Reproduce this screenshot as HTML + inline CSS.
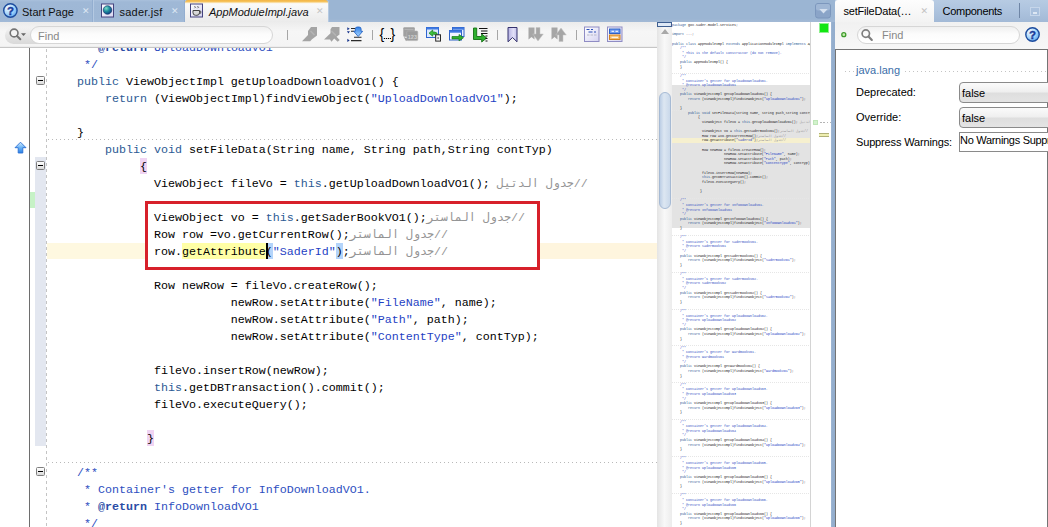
<!DOCTYPE html>
<html lang="en"><head><meta charset="utf-8"><title>AppModuleImpl.java</title>
<style>
*{box-sizing:border-box;margin:0;padding:0}
html,body{width:1048px;height:527px;overflow:hidden;background:#fff}
body{position:relative;font-family:"Liberation Sans","DejaVu Sans",sans-serif;font-size:11px;color:#000}
.abs{position:absolute}
/* ---------- left tab bar ---------- */
#tabbar{left:0;top:0;width:835px;height:22px;background:linear-gradient(#9bb5d3 0,#9bb5d3 19px,#a2b9d5 21px)}
.tab{top:0;height:22px;background:linear-gradient(#a9c0dc 0,#9fb8d6 2px,#9eb7d5 80%,#a2bad7);border-right:1px solid #93aed0;box-shadow:1px 0 0 #b4c9e2;white-space:nowrap}
.tab .t{position:absolute;top:6px;font-size:11px;color:#111}
.tab .x{position:absolute;top:6px;font-size:9px;color:#dbe6f3}
#tabA{left:185px;width:143px;background:linear-gradient(#f2b444 0,#f7c763 2px,#fbf3e2 3px,#fafafa 4px,#f2f2f2 60%,#ebebeb);border:0;border-radius:3px 3px 0 0}
/* ---------- toolbar ---------- */
#tbar{left:0;top:22px;width:657px;height:25px;background:linear-gradient(#ececec,#f6f6f6 40%,#f4f4f4);border-bottom:1px solid #ededed}
.find{border:1px solid #d6d6d6;border-radius:9px;background:linear-gradient(#f0f0f0,#fcfcfc 45%,#fff);color:#888;font-size:11px}
.sep{width:1px;background:#a9a9a9;top:30px;height:10px}
/* ---------- editor ---------- */
#ed{left:0;top:47px;width:657px;height:480px;background:#fff;overflow:hidden}
.ln{position:absolute;left:49px;height:17px;line-height:17px;white-space:pre;font-family:"Liberation Mono","DejaVu Sans Mono",monospace;font-size:11.667px;color:#000}
.k{color:#2c5a94}.s{color:#1f3fc4}.c{color:#949494}.d{color:#2e4fbf}.b{color:#2b4ca6;font-weight:bold}
.hl{position:absolute;height:16px}
.fold{left:36px;width:9px;height:9px;border:1px solid #7f7f7f;border-radius:1.5px;background:linear-gradient(#fff,#dadada)}
.fold:after{content:"";position:absolute;left:1px;top:3px;width:5px;height:1px;background:#000}
.dsep{left:48px;width:609px;height:1px;background:repeating-linear-gradient(90deg,#b9b9b9 0 1px,transparent 1px 4px)}
/* ---------- minimap ---------- */
#vs{left:657px;top:22px;width:15px;height:505px;background:linear-gradient(90deg,#e4e4e4,#f8f8f8 50%,#ececec)}
#mm{left:672px;top:22px;width:138px;height:505px;background:#fff;overflow:hidden}
#mmv{left:0;top:62.8px;width:139px;height:143px;background:#e3e3e3}
#mmc{left:0;top:116px;width:139px;height:5px;background:#f6f0cf}
.msep{border-top-color:#e6e6e6 !important;margin-top:0.8px}
#mmt{position:absolute;left:0;top:1.2px;font-family:"Liberation Mono","DejaVu Sans Mono",monospace;font-size:3.333px;line-height:4.61px;white-space:pre;color:#222}
#mmt .k{color:#2c5a94}#mmt .s{color:#1f3fc4}#mmt .c{color:#949494}#mmt .d{color:#2e4fbf}
.msep{position:absolute;left:0;width:139px;height:0;border-top:1px dotted #d6d6d6}
#rs{left:810px;top:22px;width:21px;height:505px;background:#fff}
/* ---------- right panel ---------- */
#split{left:831px;top:22px;width:4px;height:505px;background:linear-gradient(90deg,#a2b8d4,#95afce 30%,#93adcd)}
#rtab{left:835px;top:0;width:213px;height:22px;background:linear-gradient(#b7cbe3,#adc3de 50%,#a2b9d6)}
#rtabA{left:835px;top:0;width:99px;height:22px;background:linear-gradient(#fdfdfd,#f3f3f3);border-radius:3px 3px 0 0}
#rbar{left:835px;top:22px;width:213px;height:27px;background:linear-gradient(#f1f1f1,#f7f7f7)}
#rbody{left:835px;top:49px;width:213px;height:478px;background:#fff;border-top:1px solid #747474;border-left:1px solid #747474;border-right:1px solid #747474}
.lbl{font-size:11px;white-space:nowrap}
.combo{left:959px;width:100px;height:21px;border:1px solid #8a8a8a;border-radius:4px;background:linear-gradient(#fbfbfb 0,#efefef 46%,#dedede 54%,#e4e4e4 100%);font-size:11px;padding:4px 0 0 2px}
</style></head><body>
<!-- tab bar -->
<div id="tabbar" class="abs"></div>
<div class="tab abs" style="left:0;width:93px"><span class="t" style="left:22px">Start Page</span><span class="x" style="left:82px">✕</span></div>
<div class="tab abs" style="left:94px;width:91px"><span class="t" style="left:25.400px;letter-spacing:0.25px">sader.jsf</span><span class="x" style="left:77px">✕</span></div>
<div class="tab abs" id="tabA"><span class="t" style="left:24px;font-style:italic">AppModuleImpl.java</span><span class="x" style="left:131px;color:#c4c4c4">✕</span></div>
<!-- toolbar -->
<div id="tbar" class="abs"></div>
<div class="abs" style="left:5px;top:27px;width:40px;height:17px;border-radius:8.500px;background:linear-gradient(rgba(240,240,240,0),#e6e6e6 45%,#d9d9d9)"></div>
<div class="find abs" style="left:30px;top:26px;width:243px;height:18px;padding:3px 0 0 7px">Find</div>
<svg class="abs" style="left:0;top:0" width="835" height="47" viewBox="0 0 835 47">
<defs>
<radialGradient id="gHelp" cx=".32" cy=".3" r=".85"><stop offset="0" stop-color="#f2faff"/><stop offset=".55" stop-color="#a4d4fb"/><stop offset="1" stop-color="#4f9eea"/></radialGradient>
<radialGradient id="gGlobe" cx=".35" cy=".3" r=".8"><stop offset="0" stop-color="#7fe0c8"/><stop offset=".45" stop-color="#1f8f9f"/><stop offset="1" stop-color="#0b2f7a"/></radialGradient>
<linearGradient id="gPage" x1="0" y1="0" x2="1" y2="1"><stop offset="0" stop-color="#ffffff"/><stop offset="1" stop-color="#d5d3f0"/></linearGradient>
<linearGradient id="gBm" x1="0" y1="0" x2="1" y2="0"><stop offset="0" stop-color="#b4b1e2"/><stop offset=".6" stop-color="#e2e0f8"/><stop offset="1" stop-color="#c2c0ea"/></linearGradient>
<linearGradient id="gBlue" x1="0" y1="0" x2="0" y2="1"><stop offset="0" stop-color="#6fa8ee"/><stop offset="1" stop-color="#2f6fd0"/></linearGradient>
<linearGradient id="gDl" x1="0" y1="0" x2="0" y2="1"><stop offset="0" stop-color="#2f7fe6"/><stop offset="1" stop-color="#a8d6ff"/></linearGradient>
</defs>
<!-- help icon -->
<circle cx="10.400" cy="10.500" r="6.700" fill="url(#gHelp)" stroke="#1d4c9e" stroke-width="1.400"/>
<text x="10.400" y="14.500" text-anchor="middle" font-family="Liberation Sans, sans-serif" font-weight="bold" font-size="11.500" fill="#1b3c9a" stroke="#1b3c9a" stroke-width=".4">?</text>
<!-- jsf icon -->
<rect x="101.5" y="4" width="12" height="13" fill="url(#gPage)" stroke="#45437f" stroke-width="1"/>
<circle cx="107.5" cy="10" r="4.3" fill="url(#gGlobe)" stroke="#0a2a66" stroke-width=".6"/>
<!-- java icon -->
<rect x="190.5" y="4" width="12" height="13" fill="url(#gPage)" stroke="#45437f" stroke-width="1"/>
<path d="M193 10.5h6.5v2.2a2.6 2.6 0 0 1-2.6 2.6h-1.3a2.6 2.6 0 0 1-2.6-2.6z" fill="#d9d9d9" stroke="#444" stroke-width="1"/>
<path d="M199.5 11.2h1.3v2h-1.6" fill="none" stroke="#444" stroke-width=".9"/>
<path d="M194.5 6.2l1 1-1 1M197.5 6.2l1 1-1 1" fill="none" stroke="#444" stroke-width=".9"/>
<!-- magnifier -->
<circle cx="14.100" cy="33" r="3.900" fill="#f4f4f4" stroke="#747474" stroke-width="1.600"/>
<path d="M17 36l3.300 3.300" stroke="#747474" stroke-width="2" stroke-linecap="round"/>
<path d="M21 33.200h5l-2.500 2.800z" fill="#666"/>
<!-- separators -->
<g stroke="#a6a6a6" stroke-width="1"><path d="M287.5 30v10M372.5 30v10M497.5 30v10M576.5 30v10"/></g>
<!-- pins (disabled) -->
<g fill="#a4a4a4">
<path d="M311 27h6v8.500l-5 3.700-1.800 2h-8.200l6-6.200v-4z"/>
<path d="M310.500 31l4 4" stroke="#b4b4b4" stroke-width="1.500"/>
<path d="M332 27h7.500v7.500l-3 2.200 3.200 3.300-2 1.700-3.500-3.200-2.700 3.200-1.500-2.200h-6l6.500-6.300v-4z"/>
<path d="M331.500 31l4.500 4.500" stroke="#b4b4b4" stroke-width="1.500"/>
</g>
<!-- download-ish icon -->
<g>
<path d="M347.300 27.300l2.400 1.500-2.400 1.500zM346.900 31.200h3l-1.500 2.200zM347.300 38.800l2.400 1.600-2.400 1.600z" fill="#18358c"/>
<path d="M351 28.500h4M351 31.300h3.500M354 37.300h7.500M351 40.600h10.500" stroke="#2a2a2a" stroke-width="1.100"/>
<path d="M355.300 29q0-2 2-2h1.800q2 0 2 2v2.300h1.600l-4.500 5.200-4.500-5.200h1.600z" fill="url(#gDl)" stroke="#1b5cc0" stroke-width=".8"/>
</g>
<!-- {..} -->
<text x="379.600" y="38.600" font-family="Liberation Sans, sans-serif" font-size="14" fill="#000">{</text>
<text x="390.600" y="38.600" font-family="Liberation Sans, sans-serif" font-size="14" fill="#000">}</text>
<path d="M383.800 38.500h1.200M385.800 38.500h1.200M387.800 38.500h1.200M389.800 38.500h1.200" stroke="#000" stroke-width="1.200"/>
<!-- gray calendar -->
<g fill="#a0a0a0"><rect x="403.300" y="27.200" width="11.500" height="9.500" rx="1"/><rect x="406.800" y="31" width="11" height="9.600" rx="1" fill="#9c9c9c" stroke="#b4b4b4" stroke-width=".6"/><path d="M403.800 37l4.500 2-2.300 2.300z"/></g>
<path d="M404.500 29.500h9" stroke="#b8b8b8" stroke-width=".8"/>
<text x="412.400" y="39.300" text-anchor="middle" font-family="Liberation Sans, sans-serif" font-size="5.500" font-weight="bold" fill="#cfcfcf">123</text>
<!-- window + green back arrow -->
<g>
<rect x="426.500" y="27.500" width="12" height="10" fill="#dde9ff" stroke="#2f66d0" stroke-width="1"/><rect x="426.500" y="27.500" width="12" height="2" fill="#3f7ae4"/>
<path d="M429 33.200l3.700-3.200v2h1.800q3 0 3 3.500v1h-2v-1q0-1.300-1.500-1.300h-1.300v2z" fill="#3fc03f" stroke="#148014" stroke-width=".7"/>
<rect x="435.700" y="34.800" width="4.800" height="6.300" fill="#f6f6f6" stroke="#2a2a2a" stroke-width="1"/><path d="M437.300 38h1.700" stroke="#333" stroke-width="1"/>
</g>
<!-- windows + green forward arrow -->
<g>
<rect x="452.5" y="27.5" width="11.5" height="9" fill="#e8f0ff" stroke="#2f62c8" stroke-width="1"/><rect x="452.5" y="27.5" width="11.500" height="2.200" fill="#3f78e0"/>
<rect x="449.5" y="30.500" width="12" height="9.500" fill="#f2f6ff" stroke="#2f62c8" stroke-width="1"/><rect x="449.500" y="30.500" width="12" height="2.200" fill="#3f78e0"/>
<path d="M452 36.500h7v-2l4.500 3.200-4.500 3.200v-2h-7z" fill="#2fb02f" stroke="#157a15" stroke-width=".7"/>
</g>
<!-- green arrow + lines -->
<g>
<path d="M473.500 28h3.200v8.500h5v-2.500l5 4-5 4v-2.500h-8.200z" fill="#2fb02f" stroke="#136f13" stroke-width=".9"/>
<path d="M479 28.500h8.500M481 31h6.500M481 33.500h6.500M485.500 36h2M485.500 38.500h2M485.500 41h2" stroke="#111" stroke-width="1.200"/>
</g>
<!-- bookmark -->
<path d="M508 27.500h9v14.300l-4.500-4.300-4.500 4.300z" fill="url(#gBm)" stroke="#35326e" stroke-width="1"/>
<!-- gray bookmark next / prev -->
<g fill="#a6a6a6">
<path d="M528.500 27.500h6v12l-3-2.600-3 2.600z"/><path d="M536 27.500h4v6.500h3.300l-5.300 7-5.300-7h3.300z" stroke="#c4c4c4" stroke-width=".5"/>
<path d="M551.500 27.500h6v12l-3-2.600-3 2.600z"/><path d="M559 41.500h4v-6.500h3.300l-5.300-7-5.300 7h3.300z" stroke="#c4c4c4" stroke-width=".5"/>
</g>
<!-- code template icon -->
<g>
<rect x="584.500" y="27" width="14.500" height="14.500" fill="url(#gPage)" stroke="#8f8cc4" stroke-width="1"/>
<path d="M586.500 29.500h3M591 29.500h2M588.500 32h4M594 32h2" stroke="#2a4fb8" stroke-width="1.200"/>
<path d="M587 35h2.500M590.500 35h2.500M594 35h2.500" stroke="#b8b8c8" stroke-width="1"/>
</g>
<g>
<rect x="607.500" y="27" width="14.500" height="14.500" fill="url(#gPage)" stroke="#8f8cc4" stroke-width="1"/>
<rect x="609.500" y="29" width="10.500" height="4.500" fill="#6f9df0" stroke="#2458c0" stroke-width=".9"/><path d="M611.500 31.300h2.500M615.500 31.300h2.500" stroke="#fff" stroke-width="1"/>
<rect x="609.500" y="35" width="10.500" height="4.500" fill="#f8c070" stroke="#d07a10" stroke-width=".9"/><path d="M611.500 37.300h6.500" stroke="#fff" stroke-width="1"/>
</g>
<!-- tab list dropdown button -->
<rect x="815.500" y="3.500" width="15" height="14.500" rx="2.500" fill="#8aa4c8" stroke="#7c97bd" stroke-width="1"/>
<rect x="816" y="4" width="14" height="6.500" rx="2" fill="#a0b7d5"/>
<path d="M819.300 9h8.400l-4.200 4.600z" fill="#d6e1f0"/>
</svg>

<!-- editor -->
<div id="ed" class="abs">
<div class="abs" style="left:47px;top:196px;width:98px;height:16px;background:#fef8e0"></div><div class="abs" style="left:540px;top:196px;width:117px;height:16px;background:#fef5de"></div>
<div class="abs" style="left:35px;top:110px;width:11px;height:289px;background:#e3e7f0"></div>
<div class="abs" style="left:30px;top:145px;width:5px;height:16px;background:#c6f2c6"></div>
<div class="abs" style="left:29px;top:0;width:1px;height:480px;background:#6e6e6e"></div>
<div class="abs" style="left:46px;top:0;width:1px;height:480px;background:repeating-linear-gradient(180deg,#c4c4c4 0 3px,transparent 3px 6px);background-position:0 2px"></div>
<div class="hl" style="left:182px;top:196px;width:84px;background:#ffffa6"></div>
<div class="hl" style="left:266px;top:196px;width:7px;background:#b4d4fa"></div>
<div class="hl" style="left:336px;top:196px;width:7px;background:#b4d4fa"></div>
<div class="hl" style="left:140px;top:111px;width:7px;background:#f0d4f3"></div>
<div class="hl" style="left:147px;top:383px;width:7px;background:#f0d4f3"></div>
<div class="dsep abs" style="top:92px"></div>
<div class="dsep abs" style="top:415px"></div>
<div class="fold abs" style="top:29px"></div>
<div class="fold abs" style="top:114px"></div>
<div class="fold abs" style="top:420px"></div>
<svg class="abs" style="left:14px;top:94px" width="14" height="14" viewBox="0 0 14 14"><defs><linearGradient id="gArr" x1="0" y1="0" x2="0" y2="1"><stop offset="0" stop-color="#d4edff"/><stop offset=".5" stop-color="#6cb4f6"/><stop offset="1" stop-color="#2a80e6"/></linearGradient></defs><path d="M6.500 1.200L12 6.700H8.800V12H4.200V6.700H1z" fill="url(#gArr)" stroke="#2a6fd4" stroke-width=".9" stroke-linejoin="round"/></svg>
<div class="ln" style="top:-7px"><span class="d">     * </span><span class="b">@return</span><span class="d"> UploadDownloadVO1</span></div>
<div class="ln" style="top:10px"><span class="d">     */</span></div>
<div class="ln" style="top:27px"><span class="k">    public</span> ViewObjectImpl getUploadDownloadVO1() {</div>
<div class="ln" style="top:44px"><span class="k">        return</span> (ViewObjectImpl)findViewObject(<span class="s">"UploadDownloadVO1"</span>);</div>
<div class="ln" style="top:61px"></div>
<div class="ln" style="top:78px">    }</div>
<div class="ln" style="top:95px"><span class="k">        public void</span> setFileData(String name, String path,String contTyp)</div>
<div class="ln" style="top:112px">             <span class="p">{</span></div>
<div class="ln" style="top:129px">               ViewObject fileVo = <span class="k">this</span>.getUploadDownloadVO1(); <span class="c" dir="rtl">//جدول الدتيل</span></div>
<div class="ln" style="top:146px"></div>
<div class="ln" style="top:163px">               ViewObject vo = <span class="k">this</span>.getSaderBookVO1();<span class="c" dir="rtl">//جدول الماستر</span></div>
<div class="ln" style="top:180px">               Row row =vo.getCurrentRow();<span class="c" dir="rtl">//جدول الماستر</span></div>
<div class="ln cur" style="top:197px">               row.<span class="sel">getAttribute</span><span class="m">(</span><span class="s">"SaderId"</span><span class="m">)</span>;<span class="c" dir="rtl">//جدول الماستر</span></div>
<div class="ln" style="top:214px"></div>
<div class="ln" style="top:231px">               Row newRow = fileVo.createRow();</div>
<div class="ln" style="top:248px">                          newRow.setAttribute(<span class="s">"FileName"</span>, name);</div>
<div class="ln" style="top:265px">                          newRow.setAttribute(<span class="s">"Path"</span>, path);</div>
<div class="ln" style="top:282px">                          newRow.setAttribute(<span class="s">"ContentType"</span>, contTyp);</div>
<div class="ln" style="top:299px"></div>
<div class="ln" style="top:316px">               fileVo.insertRow(newRow);</div>
<div class="ln" style="top:333px">               <span class="k">this</span>.getDBTransaction().commit();</div>
<div class="ln" style="top:350px">               fileVo.executeQuery();</div>
<div class="ln" style="top:367px"></div>
<div class="ln" style="top:384px">              <span class="p">}</span></div>
<div class="ln" style="top:401px"></div>
<div class="ln" style="top:418px"><span class="d">    /**</span></div>
<div class="ln" style="top:435px"><span class="d">     * Container's getter for InfoDownloadVO1.</span></div>
<div class="ln" style="top:452px"><span class="d">     * </span><span class="b">@return</span><span class="d"> InfoDownloadVO1</span></div>
<div class="ln" style="top:469px"><span class="d">     */</span></div>
<div class="abs" style="left:145px;top:154px;width:395px;height:69px;border:3px solid #d7202a"></div>
<div class="abs" style="left:266px;top:196px;width:2px;height:16px;background:#000"></div>
</div>
<div class="abs" style="left:0;top:47px;width:657px;height:1px;background:#c6c6c6"></div>
<!-- scrollbar + minimap -->
<div id="vs" class="abs"></div>
<div class="abs" style="left:657px;top:22px;width:15px;height:5px;border:1px solid #3f5f91;background:#dfe9f6"></div>
<div class="abs" style="left:661px;top:29px;width:0;height:0;border-left:4px solid transparent;border-right:4px solid transparent;border-bottom:5px solid #a8a8a8"></div>
<div class="abs" style="left:659px;top:92px;width:12px;height:117px;border-radius:6px;border:1px solid #a6bad4;background:linear-gradient(90deg,#bccee5,#dde7f2 40%,#c9d8ea)"></div>
<div id="mm" class="abs"><div id="mmv" class="abs"></div><div id="mmc" class="abs"></div><div class="msep" style="top:50.61px"></div><div class="msep" style="top:87.48px"></div><div class="msep" style="top:175.08px"></div><div class="msep" style="top:211.96px"></div><div class="msep" style="top:248.84px"></div><div class="msep" style="top:285.71px"></div><div class="msep" style="top:322.60px"></div><div class="msep" style="top:359.48px"></div><div class="msep" style="top:396.36px"></div><div class="msep" style="top:433.24px"></div><div class="msep" style="top:470.12px"></div><div class="msep" style="top:507.00px"></div><pre id="mmt"><span class="k">package</span> gov.sader.model.services;

<span class="k">import</span> ...;

<span class="k">public class</span> AppModuleImpl <span class="k">extends</span> ApplicationModuleImpl <span class="k">implements</span> AppModule {
<span class="d">    /**</span>
<span class="d">     * This is the default constructor (do not remove).</span>
<span class="d">     */</span>
<span class="k">    public</span> AppModuleImpl() {
    }

<span class="d">    /**</span>
<span class="d">     * Container's getter for UploadDownloadVO1.</span>
<span class="d">     * @return UploadDownloadVO1</span>
<span class="d">     */</span>
<span class="k">    public</span> ViewObjectImpl getUploadDownloadVO1() {
<span class="k">        return</span> (ViewObjectImpl)findViewObject(<span class="s">"UploadDownloadVO1"</span>);

    }
<span class="k">        public void</span> setFileData(String name, String path,String contTyp)
             {
               ViewObject fileVo = <span class="k">this</span>.getUploadDownloadVO1(); <span class="c" dir="rtl">//جدول الدتيل</span>

               ViewObject vo = <span class="k">this</span>.getSaderBookVO1();<span class="c" dir="rtl">//جدول الماستر</span>
               Row row =vo.getCurrentRow();<span class="c" dir="rtl">//جدول الماستر</span>
               row.getAttribute(<span class="s">"SaderId"</span>);<span class="c" dir="rtl">//جدول الماستر</span>

               Row newRow = fileVo.createRow();
                          newRow.setAttribute(<span class="s">"FileName"</span>, name);
                          newRow.setAttribute(<span class="s">"Path"</span>, path);
                          newRow.setAttribute(<span class="s">"ContentType"</span>, contTyp);

               fileVo.insertRow(newRow);
               <span class="k">this</span>.getDBTransaction().commit();
               fileVo.executeQuery();

              }

<span class="d">    /**</span>
<span class="d">     * Container's getter for InfoDownloadVO1.</span>
<span class="d">     * @return InfoDownloadVO1</span>
<span class="d">     */</span>
<span class="k">    public</span> ViewObjectImpl getInfoDownloadVO1() {
<span class="k">        return</span> (ViewObjectImpl)findViewObject(<span class="s">"InfoDownloadVO1"</span>);
    }

<span class="d">    /**</span>
<span class="d">     * Container's getter for SaderBookVO1.</span>
<span class="d">     * @return SaderBookVO1</span>
<span class="d">     */</span>
<span class="k">    public</span> ViewObjectImpl getSaderBookVO1() {
<span class="k">        return</span> (ViewObjectImpl)findViewObject(<span class="s">"SaderBookVO1"</span>);
    }

<span class="d">    /**</span>
<span class="d">     * Container's getter for SaderBookVO2.</span>
<span class="d">     * @return SaderBookVO2</span>
<span class="d">     */</span>
<span class="k">    public</span> ViewObjectImpl getSaderBookVO2() {
<span class="k">        return</span> (ViewObjectImpl)findViewObject(<span class="s">"SaderBookVO2"</span>);
    }

<span class="d">    /**</span>
<span class="d">     * Container's getter for UploadDownloadVO2.</span>
<span class="d">     * @return UploadDownloadVO2</span>
<span class="d">     */</span>
<span class="k">    public</span> ViewObjectImpl getUploadDownloadVO2() {
<span class="k">        return</span> (ViewObjectImpl)findViewObject(<span class="s">"UploadDownloadVO2"</span>);
    }

<span class="d">    /**</span>
<span class="d">     * Container's getter for WardBookVO1.</span>
<span class="d">     * @return WardBookVO1</span>
<span class="d">     */</span>
<span class="k">    public</span> ViewObjectImpl getWardBookVO1() {
<span class="k">        return</span> (ViewObjectImpl)findViewObject(<span class="s">"WardBookVO1"</span>);
    }

<span class="d">    /**</span>
<span class="d">     * Container's getter for UploadDownloadVO3.</span>
<span class="d">     * @return UploadDownloadVO3</span>
<span class="d">     */</span>
<span class="k">    public</span> ViewObjectImpl getUploadDownloadVO3() {
<span class="k">        return</span> (ViewObjectImpl)findViewObject(<span class="s">"UploadDownloadVO3"</span>);
    }

<span class="d">    /**</span>
<span class="d">     * Container's getter for UploadDownloadVO4.</span>
<span class="d">     * @return UploadDownloadVO4</span>
<span class="d">     */</span>
<span class="k">    public</span> ViewObjectImpl getUploadDownloadVO4() {
<span class="k">        return</span> (ViewObjectImpl)findViewObject(<span class="s">"UploadDownloadVO4"</span>);
    }

<span class="d">    /**</span>
<span class="d">     * Container's getter for UploadDownloadVO5.</span>
<span class="d">     * @return UploadDownloadVO5</span>
<span class="d">     */</span>
<span class="k">    public</span> ViewObjectImpl getUploadDownloadVO5() {
<span class="k">        return</span> (ViewObjectImpl)findViewObject(<span class="s">"UploadDownloadVO5"</span>);
    }

<span class="d">    /**</span>
<span class="d">     * Container's getter for UploadDownloadVO6.</span>
<span class="d">     * @return UploadDownloadVO6</span>
<span class="d">     */</span>
<span class="k">    public</span> ViewObjectImpl getUploadDownloadVO6() {
<span class="k">        return</span> (ViewObjectImpl)findViewObject(<span class="s">"UploadDownloadVO6"</span>);
    }
</pre></div>
<div id="rs" class="abs"></div>
<div class="abs" style="left:810px;top:22px;width:1px;height:505px;background:#d4d4d4"></div>
<div class="abs" style="left:819px;top:23px;width:10px;height:10px;background:#12e612;border:1px solid #8ff08f"></div>
<div class="abs" style="left:813px;top:120px;width:5px;height:5px;background:#d2f2cc;border:1px solid #bfe6b8"></div>
<div class="abs" style="left:820px;top:122px;width:11px;height:1px;background:repeating-linear-gradient(90deg,#b4b4b4 0 1.500px,transparent 1.500px 3.300px)"></div>
<div class="abs" style="left:819px;top:133px;width:10px;height:4px;background:#eeeeb0;border-top:1px solid #b0b078;border-bottom:1px solid #b0b078"></div>
<!-- right panel -->
<div id="split" class="abs"></div>
<div id="rtab" class="abs"></div>
<div id="rtabA" class="abs"></div>
<div class="abs lbl" style="left:843.500px;top:5px;letter-spacing:-0.2px">setFileData(…</div>
<div class="abs" style="left:920.500px;top:6px;font-size:9px;color:#c2c2c2">✕</div>
<div class="abs lbl" style="left:942.500px;top:5px;letter-spacing:-0.28px">Components</div>
<div class="abs" style="left:1019px;top:3px;width:1px;height:15px;background:#6f86a6"></div>
<div class="abs" style="left:1030px;top:7px;width:10px;height:9px;border:1px solid #c6d6ea;background:#a9c0dd"></div>
<div class="abs" style="left:1033px;top:12px;width:4px;height:2px;background:#dde7f3"></div>
<div id="rbar" class="abs"></div>
<div class="find abs" style="left:857px;top:26px;width:163px;height:18px;padding:2px 0 0 24px">Find</div>
<div id="rbody" class="abs"></div>
<div class="abs" style="left:1047px;top:49px;width:1px;height:478px;background:#747474"></div>
<svg class="abs" style="left:836px;top:22px" width="212" height="26" viewBox="836 22 212 26">
<circle cx="843.800" cy="34.700" r="2" fill="#c8eeb0" stroke="#3d9a2c" stroke-width="1.300"/>
<circle cx="865.800" cy="33.600" r="3.700" fill="none" stroke="#7f7f7f" stroke-width="1.700"/>
<path d="M868.500 36.500l3.300 3.400" stroke="#7f7f7f" stroke-width="2.200" stroke-linecap="round"/>
<circle cx="1032.500" cy="34.500" r="6.700" fill="url(#gHelp)" stroke="#1d4c9e" stroke-width="1.400"/>
<text x="1032.500" y="38.600" text-anchor="middle" font-family="Liberation Sans, sans-serif" font-weight="bold" font-size="11.500" fill="#1b3c9a" stroke="#1b3c9a" stroke-width=".4">?</text>
</svg>
<div class="abs" style="left:845px;top:71px;width:203px;height:1px;background:repeating-linear-gradient(90deg,#c4c4c4 0 1px,transparent 1px 4px)"></div>
<div class="abs lbl" style="left:854px;top:64px;color:#3b6ea8;background:#fff;padding:0 2px">java.lang</div>
<div class="abs lbl" style="left:856px;top:86px">Deprecated:</div>
<div class="abs lbl" style="left:856px;top:111px">Override:</div>
<div class="abs lbl" style="left:856px;top:136px;letter-spacing:-0.15px">Suppress Warnings:</div>
<div class="combo abs" style="top:82px">false</div>
<div class="combo abs" style="top:107px">false</div>
<div class="abs lbl" style="left:959px;top:132px;width:100px;height:20px;border:1px solid #8a8a8a;background:#fff;padding:1px 0 0 0;letter-spacing:-0.3px;overflow:hidden">No Warnings Suppressed</div>
</body></html>
